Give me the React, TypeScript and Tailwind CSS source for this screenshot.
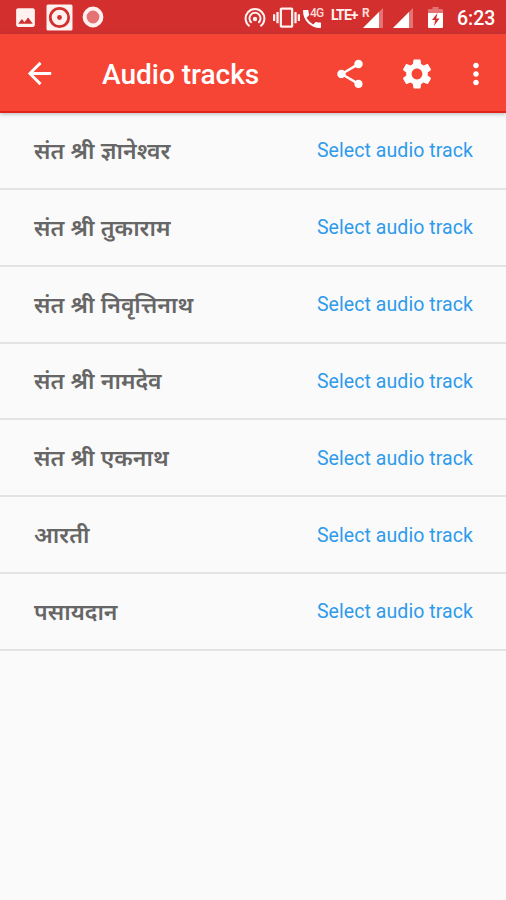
import {
  MdArrowBack,
  MdImage,
  MdMoreVert,
  MdPhone,
  MdSettings,
  MdShare,
  MdVibration,
} from "react-icons/md";

const tracks = [
  "संत श्री ज्ञानेश्वर",
  "संत श्री तुकाराम",
  "संत श्री निवृत्तिनाथ",
  "संत श्री नामदेव",
  "संत श्री एकनाथ",
  "आरती",
  "पसायदान",
];

function RecorderIcon() {
  return (
    <svg viewBox="0 0 27 27" className="ml-[8px] h-[27px] w-[27px]">
      <rect x="0.5" y="0.5" width="26" height="26" rx="1.5" fill="#fff1ef" />
      <circle cx="13.5" cy="13.5" r="9.2" fill="none" stroke="#d32f2f" strokeWidth="2.8" />
      <circle cx="13.5" cy="13.5" r="2.4" fill="#d32f2f" />
    </svg>
  );
}

function RecordDotIcon() {
  return (
    <svg viewBox="0 0 22 22" className="ml-[9px] h-[22px] w-[22px]">
      <circle cx="11" cy="11" r="8.4" fill="#e57373" stroke="#fff1ef" strokeWidth="4" />
    </svg>
  );
}

function HotspotIcon() {
  return (
    <svg
      viewBox="0 0 22 22"
      className="h-[22px] w-[22px]"
      fill="none"
      stroke="#fff1ef"
      strokeWidth="2"
    >
      <path d="M5.6 19.2A9.4 9.4 0 1 1 16.4 19.2" />
      <path d="M7.7 15.7A5.5 5.5 0 1 1 14.3 15.7" />
      <circle cx="11" cy="12" r="2.2" fill="#fff1ef" stroke="none" />
    </svg>
  );
}

function SignalIcon() {
  return (
    <svg viewBox="0 0 21 20" className="h-5 w-[21px]">
      <path d="M21 0V20H1Z" fill="#e57373" />
      <path d="M17 4V20H1Z" fill="#fff" />
    </svg>
  );
}

function BatteryIcon() {
  return (
    <svg viewBox="0 0 15 21" className="ml-[15px] h-[21px] w-[15px]">
      <path d="M4.5 0h6v2H14a1 1 0 0 1 1 1v3H0V3a1 1 0 0 1 1-1h3.5z" fill="#e57373" />
      <path d="M0 6h15v14a1 1 0 0 1-1 1H1a1 1 0 0 1-1-1z" fill="#fff" />
      <path d="M9.5 6L4 13h3.2L6 19l5.5-7.5H8.2z" fill="#d32f2f" />
    </svg>
  );
}

function StatusBar() {
  return (
    <div className="flex h-[34px] items-center bg-[#d32f2f] pr-[11px] pl-[13px] text-white">
      <MdImage className="h-[25px] w-[25px] text-[#fff1ef]" />
      <RecorderIcon />
      <RecordDotIcon />
      <div className="ml-auto flex h-full items-center">
        <div className="pt-[2px]">
          <HotspotIcon />
        </div>
        <MdVibration className="ml-[7px] h-[27px] w-[27px] text-[#fff1ef]" />
        <div className="relative h-6 w-[30px]">
          <MdPhone className="absolute top-[2px] left-0 h-[24px] w-[24px]" />
          <span className="absolute top-[3px] left-[10px] bg-[#d32f2f] text-[12px] leading-[11px] font-medium tracking-[-0.8px] text-[#ffd9d6]">
            4G
          </span>
        </div>
        <span className="ml-[1px] w-[31px] pb-[5px] text-[14px] leading-4 font-bold tracking-[-0.9px] text-[#fff1ef]">
          LTE+
        </span>
        <div className="relative mt-[2px]">
          <SignalIcon />
          <span className="absolute top-0 left-0 text-[12px] leading-[10px] font-bold text-[#ffd9d6]">
            R
          </span>
        </div>
        <div className="mt-[2px] ml-[9px]">
          <SignalIcon />
        </div>
        <BatteryIcon />
        <span className="ml-[14px] w-[38px] pt-[3px] text-[19.5px] leading-5 font-medium whitespace-nowrap">
          6:23
        </span>
      </div>
    </div>
  );
}

function Toolbar() {
  return (
    <div className="relative flex h-[79px] items-center border-b-2 border-[#e3221c] bg-[#f64435] text-white shadow-[0_1px_4px_rgba(60,80,90,0.4)]">
      <button type="button" aria-label="Back" className="ml-[22px] pt-[1px]">
        <MdArrowBack className="h-[35px] w-[35px]" />
      </button>
      <h1 className="ml-[45px] pt-[4px] text-[28px] leading-8 font-medium whitespace-nowrap">
        Audio tracks
      </h1>
      <button type="button" aria-label="Share" className="ml-auto pt-[2px]">
        <MdShare className="h-[34px] w-[34px]" />
      </button>
      <button type="button" aria-label="Settings" className="ml-[32px] pt-[2px]">
        <MdSettings className="h-[36px] w-[36px]" />
      </button>
      <button type="button" aria-label="More options" className="mr-[13px] ml-[24px] pt-[2px]">
        <MdMoreVert className="h-[34px] w-[34px]" />
      </button>
    </div>
  );
}

function TrackRow({ name }: { name: string }) {
  return (
    <li className="flex h-[76.85px] items-center justify-between border-b-2 border-[#e3e3e3] pr-[33px] pl-[34px]">
      <span
        lang="hi"
        className="pt-[3px] text-[23px] leading-8 font-semibold [word-spacing:0.6px] whitespace-nowrap text-[#666]"
      >
        {name}
      </span>
      <button
        type="button"
        className="pt-[2px] text-[19.5px] leading-6 tracking-[0.07px] whitespace-nowrap text-[#2f9bea]"
      >
        Select audio track
      </button>
    </li>
  );
}

function App() {
  return (
    <div className="flex h-[900px] w-[506px] flex-col overflow-hidden bg-[#fafafa] font-['Roboto','Noto_Sans',sans-serif]">
      <StatusBar />
      <Toolbar />
      <ul>
        {tracks.map((name) => (
          <TrackRow key={name} name={name} />
        ))}
      </ul>
    </div>
  );
}

export default App;
